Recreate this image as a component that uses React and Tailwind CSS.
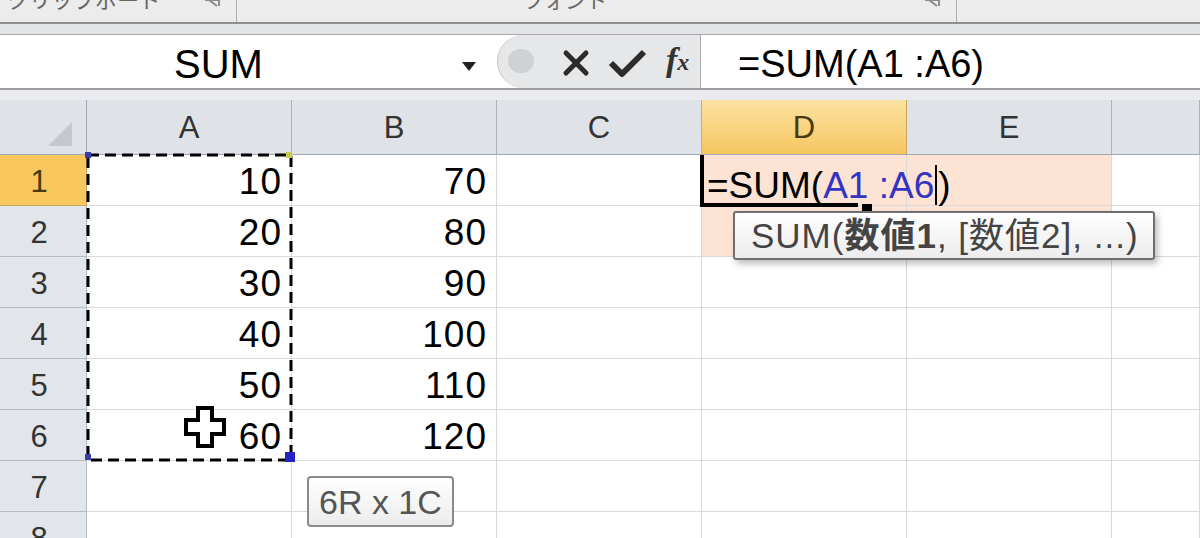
import React from 'react'

const FONT = { fontFamily: '"Liberation Sans", "Noto Sans CJK JP", sans-serif' }

const COLS = ['A', 'B', 'C', 'D', 'E', '']
const COL_W = [205, 205, 205, 205, 205, 88]
const ROWS = [
  ['10', '70'],
  ['20', '80'],
  ['30', '90'],
  ['40', '100'],
  ['50', '110'],
  ['60', '120'],
  ['', ''],
  ['', ''],
]

function Launcher() {
  return (
    <svg width="20" height="8" viewBox="0 0 20 8">
      <path d="M4 0 L18 0 L18 6" stroke="#8c8c8c" strokeWidth="2" fill="none" />
      <path d="M8 0 L16 6" stroke="#8c8c8c" strokeWidth="2" />
    </svg>
  )
}

function Ribbon() {
  return (
    <div className="h-[24px] bg-[#ececec] border-b-2 border-[#8e8e8e] flex overflow-hidden">
      <div className="w-[237px] flex items-start border-r border-[#b0b0b0] pl-[7px] pr-[15px]">
        <span className="text-[22px] leading-none mt-[-10px] text-[#666] whitespace-nowrap">クリップボード</span>
        <div className="ml-auto"><Launcher /></div>
      </div>
      <div className="w-[720px] flex items-start border-r border-[#b0b0b0] pr-[15px]">
        <span className="text-[21px] leading-none mt-[-10px] text-[#666] ml-[286px] whitespace-nowrap">フォント</span>
        <div className="ml-auto"><Launcher /></div>
      </div>
      <div className="flex-1" />
    </div>
  )
}

function FormulaBar() {
  return (
    <div>
      <div className="h-[11px] bg-[#e1e3e6] border-b border-[#a9a9a9]" />
      <div className="h-[55px] flex bg-white border-b-2 border-[#9c9c9c]">
        <div className="w-[497px] relative">
          <span className="absolute left-[174px] top-[9px] text-[40px] leading-none text-black">SUM</span>
          <svg width="14" height="9" viewBox="0 0 14 9" className="absolute left-[462px] top-[27px]">
            <path d="M0 0 L14 0 L7 9 Z" fill="#222" />
          </svg>
        </div>
        <div className="w-[203px] bg-[#e6e7e9] rounded-l-[28px] border-l border-[#c4c4c4] relative">
          <div className="absolute left-[10px] top-[14px] w-[26px] h-[24px] rounded-full bg-[#cfd1d3]" />
          <svg width="30" height="30" viewBox="0 0 30 30" className="absolute top-[13px]" style={{ left: 63 }}>
            <path d="M5 5 L25 25 M25 5 L5 25" stroke="#2b2b2b" strokeWidth="5" strokeLinecap="round" />
          </svg>
          <svg width="40" height="30" viewBox="0 0 40 30" className="absolute top-[13px]" style={{ left: 110 }}>
            <path d="M3 15 L14 26 L36 4" stroke="#2b2b2b" strokeWidth="6" fill="none" strokeLinejoin="round" />
          </svg>
          <div
            className="absolute top-[8px] flex items-end italic font-bold text-[#333] leading-none"
            style={{ left: 168, fontFamily: '"Liberation Serif", serif' }}
          >
            <span className="text-[34px]">f</span>
            <span className="text-[24px] mb-[3px]">x</span>
          </div>
        </div>
        <div className="flex-1 border-l border-[#a9a9a9] relative">
          <span className="absolute left-[37px] top-[10px] text-[38px] leading-none text-black whitespace-nowrap">=SUM(A1 :A6)</span>
        </div>
      </div>
      <div className="h-[10px] bg-[#e9ebee]" />
    </div>
  )
}

function HeaderRow() {
  return (
    <div className="flex h-[55px] border-b border-[#9ea8b4]">
      <div className="w-[87px] bg-[#dfe3e8] border-r border-[#9ea8b4] relative">
        <svg width="24" height="24" viewBox="0 0 24 24" className="absolute right-[14px] bottom-[8px]">
          <path d="M24 0 L24 24 L0 24 Z" fill="#c3c8ce" />
        </svg>
      </div>
      {COLS.map((c, i) => (
        <div
          key={i}
          className={`flex items-center justify-center border-r text-[31px] pt-[2px] ${
            c === 'D'
              ? 'bg-gradient-to-b from-[#fbe2a2] to-[#f6c65e] border-[#c9a45a] text-[#4a3a10]'
              : 'bg-[#dfe3e8] border-[#a9b1bc] text-[#333]'
          }`}
          style={{ width: COL_W[i] }}
        >
          {c}
        </div>
      ))}
    </div>
  )
}

function Row({ n, vals }) {
  const active = n === 1
  return (
    <div className="flex h-[51px]">
      <div
        className={`w-[87px] flex items-center justify-center pr-[8px] pt-[4px] border-r border-b text-[31px] ${
          active ? 'bg-[#f8c85e] border-[#c9a45a] text-[#4a3a10]' : 'bg-[#e2e6eb] border-[#b3bbc5] text-[#333]'
        }`}
      >
        {n}
      </div>
      {COL_W.map((w, i) => {
        const peach = (i === 3 || i === 4) && (n === 1 || n === 2)
        return (
          <div
            key={i}
            className={`flex items-center justify-end pr-[9px] pt-[4px] border-r border-b border-[#d9d9d9] text-[37px] tracking-[1px] text-black ${
              peach ? 'bg-[#fde3d3]' : 'bg-white'
            }`}
            style={{ width: w }}
          >
            {i < 2 ? vals[i] : ''}
          </div>
        )
      })}
    </div>
  )
}

function Overlays() {
  return (
    <>
      {/* marching ants round A1:A6 */}
      <svg width="210" height="312" className="absolute left-[85px] top-[52px]" viewBox="0 0 210 312">
        <rect x="3" y="3" width="203" height="305" fill="none" stroke="#000" strokeWidth="3" strokeDasharray="11 6" />
        <rect x="0" y="0" width="6" height="6" fill="#3a3aa8" />
        <rect x="201" y="0" width="6" height="6" fill="#c8c84a" />
        <rect x="0" y="302" width="6" height="6" fill="#3a3aa8" />
        <rect x="200" y="300" width="10" height="10" fill="#2323c8" />
      </svg>

      {/* cross cursor */}
      <svg width="44" height="44" viewBox="0 0 44 44" className="absolute left-[183px] top-[305px]">
        <path d="M15 3 H29 V15 H41 V29 H29 V41 H15 V29 H3 V15 H15 Z" fill="#fff" stroke="#000" strokeWidth="4" strokeLinejoin="miter" />
      </svg>

      {/* D1 in edit mode */}
      <div className="absolute left-[700px] top-[55px] w-[4px] h-[51px] bg-black" />
      <div className="absolute left-[700px] top-[103px] w-[158px] h-[4px] bg-black" />
      <div className="absolute left-[862px] top-[104px] w-[10px] h-[8px] bg-black" />
      <div className="absolute left-[707px] top-[67px] text-[37px] leading-none text-black whitespace-nowrap">
        =SUM(<span className="text-[#3434c4]">A1 :A6</span>
        <span className="inline-block w-[2px] h-[40px] bg-black align-middle mx-[1px] mt-[-6px]" />)
      </div>

      {/* function tooltip */}
      <div className="absolute left-[733px] top-[111px] h-[49px] pl-[16px] pr-[14px] flex items-center border-2 border-[#6f6f6f] rounded-[3px] bg-gradient-to-b from-white to-[#ececec] shadow-[3px_4px_6px_rgba(0,0,0,0.25)] text-[35px] tracking-[1px] leading-none text-[#444] whitespace-nowrap">
        SUM(<span className="font-bold">数値1</span>, [数値2], ...)
      </div>

      {/* size tooltip */}
      <div className="absolute left-[307px] top-[376px] h-[51px] px-[10px] flex items-center border-2 border-[#8a8a8a] rounded-[4px] bg-gradient-to-b from-white to-[#ececec] text-[34px] leading-none text-[#555] whitespace-nowrap">
        6R x 1C
      </div>
    </>
  )
}

export default function App() {
  return (
    <div className="w-[1200px] h-[538px] overflow-hidden bg-white" style={FONT}>
      <Ribbon />
      <FormulaBar />
      <div className="relative">
        <HeaderRow />
        {ROWS.map((vals, i) => (
          <Row key={i} n={i + 1} vals={vals} />
        ))}
        <Overlays />
      </div>
    </div>
  )
}
